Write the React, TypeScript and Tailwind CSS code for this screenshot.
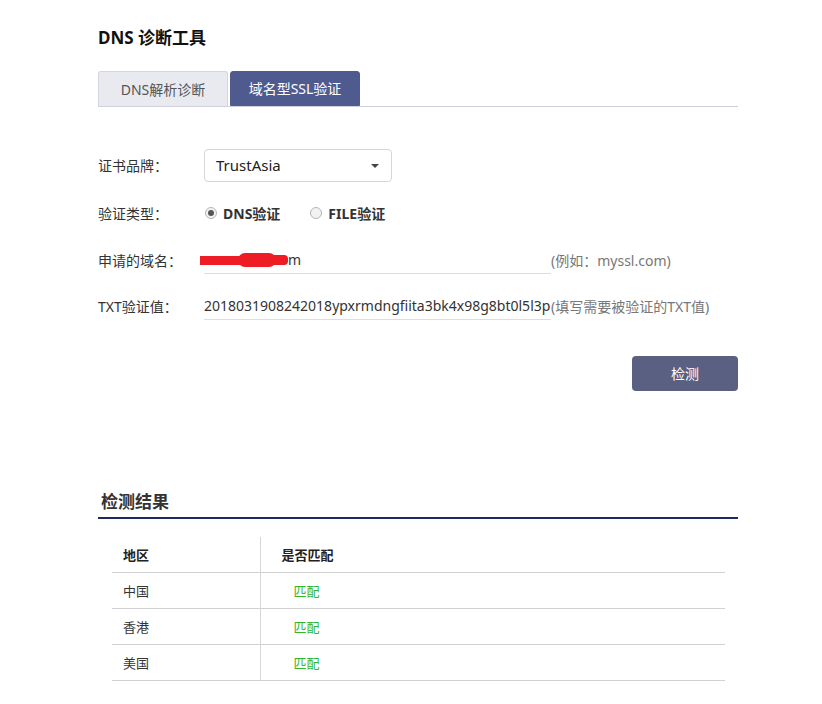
import { useState } from "react";

const rows = [
  { region: "中国", result: "匹配" },
  { region: "香港", result: "匹配" },
  { region: "美国", result: "匹配" },
];

function Radio({ checked, label }: { checked?: boolean; label: string }) {
  return (
    <label className="flex items-center gap-[6px]">
      <span className="flex h-[12px] w-[12px] items-center justify-center rounded-full border border-[#b5b5b5] bg-[#f2f2f2]">
        {checked && <span className="h-[6px] w-[6px] rounded-full bg-[#555]" />}
      </span>
      <span className="text-[14px] font-bold text-[#333]">{label}</span>
    </label>
  );
}

// red marker scribble that hides the domain in the screenshot
function Redaction() {
  return (
    <div className="-ml-[4px] flex items-center">
      <div className="h-[9px] w-[40px] bg-[#ee1c25]" />
      <div className="-ml-[2px] h-[14px] w-[38px] rounded-[7px] bg-[#ee1c25]" />
      <div className="-ml-[4px] h-[10px] w-[16px] rounded-r-[4px] bg-[#ee1c25]" />
      <span className="text-[14px] leading-[20px] text-[#333]">m</span>
    </div>
  );
}

export default function App() {
  const [tab, setTab] = useState(1);

  return (
    <div
      className="min-h-[704px] w-[822px] bg-white pl-[98px] pt-[27px] text-[#333]"
      style={{ fontFamily: '"Noto Sans", "Noto Sans CJK SC", sans-serif' }}
    >
      <div className="w-[640px]">
        <h1 className="text-[17px] font-bold leading-[22px] text-[#111]">DNS 诊断工具</h1>

        {/* tabs */}
        <div className="mt-[22px] flex gap-[2px] border-b border-[#cfd0dc]">
          <button
            onClick={() => setTab(0)}
            className={`h-[35px] w-[130px] rounded-t-[3px] border text-[14px] ${
              tab === 0
                ? "border-[#4f5b8f] bg-[#4f5b8f] text-white"
                : "border-[#d4d5de] border-b-0 bg-[#e9eaf0] text-[#555]"
            }`}
          >
            DNS解析诊断
          </button>
          <button
            onClick={() => setTab(1)}
            className={`h-[35px] w-[130px] rounded-t-[3px] border text-[14px] ${
              tab === 1
                ? "border-[#4f5b8f] bg-[#4f5b8f] text-white"
                : "border-[#d4d5de] border-b-0 bg-[#e9eaf0] text-[#555]"
            }`}
          >
            域名型SSL验证
          </button>
        </div>

        {/* form */}
        <div className="mt-[42px] flex flex-col">
          <div className="flex h-[33px] items-center">
            <span className="w-[106px] text-[14px]">证书品牌：</span>
            <div className="flex h-[33px] w-[188px] items-center justify-between rounded-[4px] border border-[#d6d6d6] pl-[11px] pr-[12px]">
              <span className="text-[15px] text-[#222]">TrustAsia</span>
              <span className="h-0 w-0 border-x-[4px] border-t-[4px] border-x-transparent border-t-[#444]" />
            </div>
          </div>

          <div className="mt-[18px] flex h-[26px] items-center">
            <span className="w-[106px] text-[14px]">验证类型：</span>
            <div className="flex items-center gap-[30px] pl-[1px]">
              <Radio checked label="DNS验证" />
              <Radio label="FILE验证" />
            </div>
          </div>

          <div className="mt-[19px] flex items-end">
            <span className="mb-[3px] w-[106px] text-[14px] leading-[20px]">申请的域名：</span>
            <div className="flex h-[29px] w-[347px] items-end border-b border-[#ddd] pb-[3px]">
              <Redaction />
            </div>
            <span className="mb-[3px] text-[14px] leading-[20px] text-[#777]">(例如：myssl.com)</span>
          </div>

          <div className="mt-[17px] flex items-end">
            <span className="mb-[3px] w-[106px] text-[14px] leading-[20px]">TXT验证值：</span>
            <div className="flex h-[29px] w-[347px] items-end overflow-hidden whitespace-nowrap border-b border-[#ddd] pb-[3px] text-[14px] leading-[20px] text-[#333]">
              2018031908242018ypxrmdngfiita3bk4x98g8bt0l5l3p
            </div>
            <span className="mb-[3px] whitespace-nowrap text-[14px] leading-[20px] text-[#777]">(填写需要被验证的TXT值)</span>
          </div>

          <div className="mt-[36px] flex justify-end">
            <button className="h-[35px] w-[106px] rounded-[4px] bg-[#5a6082] text-[14px] text-white">检测</button>
          </div>
        </div>

        {/* result */}
        <div className="mt-[100px]">
          <h2 className="pl-[3px] text-[17px] font-bold leading-[22px] text-[#333]">检测结果</h2>
          <div className="mt-[4px] h-[2px] bg-[#1b2b5c]" />

          <table className="ml-[14px] mt-[18px] w-[613px] border-collapse text-[13px]">
            <thead>
              <tr className="h-[35px] border-b border-[#d0d0d0]">
                <th className="w-[148px] border-r border-[#d6d6d6] pl-[11px] pt-[3px] text-left font-bold text-[#222]">地区</th>
                <th className="pl-[21px] pt-[3px] text-left font-bold text-[#222]">是否匹配</th>
              </tr>
            </thead>
            <tbody>
              {rows.map((r) => (
                <tr key={r.region} className="h-[36px] border-b border-[#d0d0d0]">
                  <td className="border-r border-[#d6d6d6] pl-[11px] pt-[3px] text-[#333]">{r.region}</td>
                  <td className="pl-[33px] pt-[3px] text-[#2fb52f]">{r.result}</td>
                </tr>
              ))}
            </tbody>
          </table>
        </div>
      </div>
    </div>
  );
}
